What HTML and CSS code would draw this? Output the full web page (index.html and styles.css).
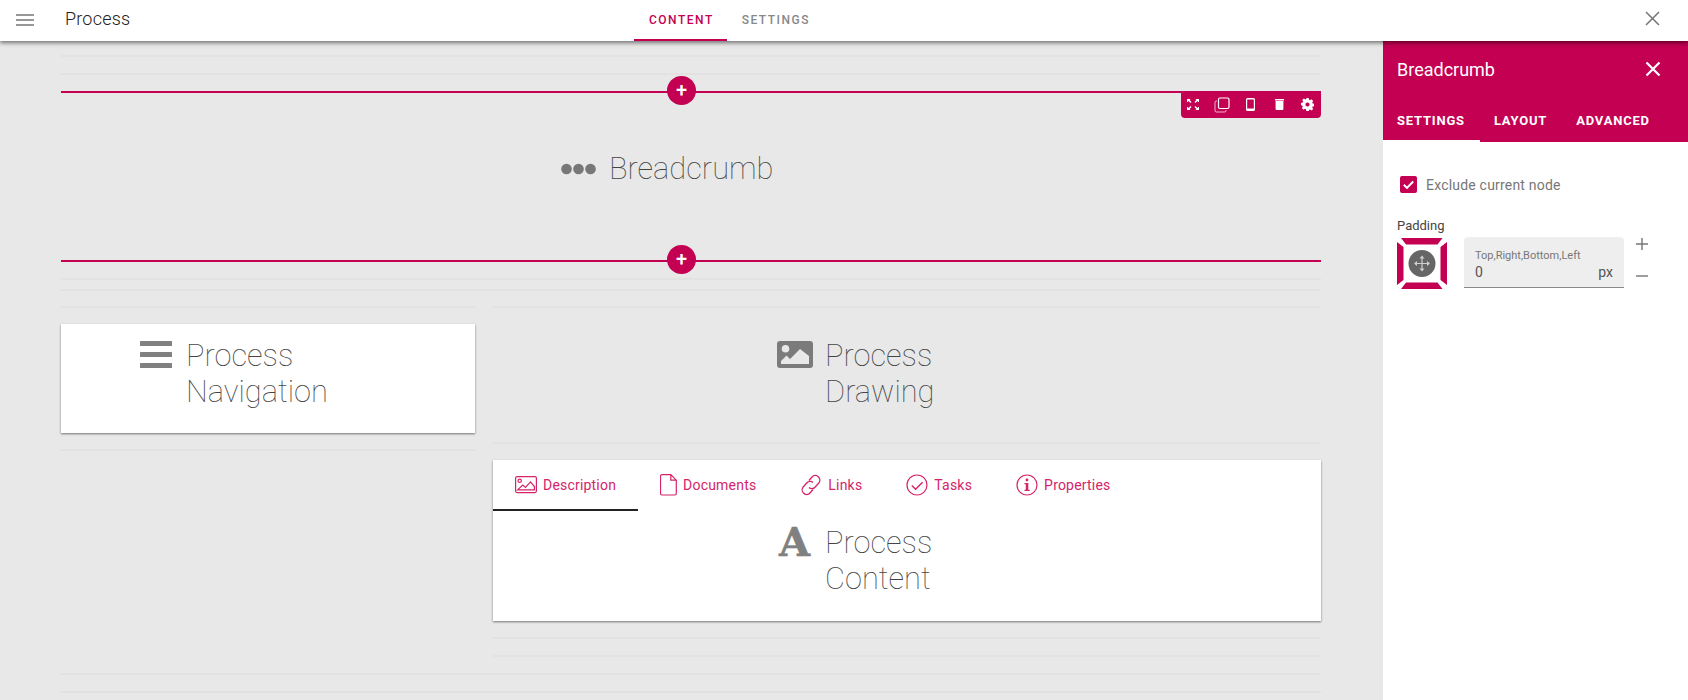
FILE: index.html
```html
<!DOCTYPE html>
<html lang="en">
<head>
<meta charset="utf-8">
<title>Process</title>
<link rel="stylesheet" href="styles.css">
</head>
<body>
<div class="app">
  <header class="topbar">
    <div class="topbar-left">
      <svg class="menu-icon" width="18" height="12" viewBox="0 0 18 12"><path d="M0 1h18M0 6h18M0 11h18" stroke="#757575" stroke-width="1.6"/></svg>
      <span class="app-title">Process</span>
    </div>
    <nav class="top-tabs">
      <span class="top-tab active">CONTENT</span>
      <span class="top-tab">SETTINGS</span>
    </nav>
    <svg class="top-close" width="15" height="15" viewBox="0 0 15 15"><path d="M1 1l13 13M14 1L1 14" stroke="#757575" stroke-width="1.5"/></svg>
  </header>
  <div class="main">
    <main class="canvas">
      <div class="rule"></div>
      <div class="rule"></div>
      <section class="active-section">
        <span class="add-btn add-top">+</span>
        <div class="toolbar">
          <svg width="12" height="11" viewBox="0 0 12 11" fill="#fff"><path d="M0 0h3.500L2.600 1 4.500 2.900 3.500 3.900 1.600 2 .8 3H0zM12 0v3h-.8L10.400 2 8.500 3.900l-1-1L9.400 1 8.500 0zM0 11V8h.8l.8 1 1.900-1.900 1 1L2.600 10l.9 1zM12 11H8.500l.9-1-1.900-1.900 1-1 1.900 1.900.8-1h.8z"/></svg>
          <svg width="16" height="16" viewBox="0 0 16 16" fill="none" stroke="#fff"><rect x="4.500" y="1" width="10.500" height="10.500" rx="1.500" stroke-width="1.200"/><path d="M3 4H2.500A1.500 1.500 0 0 0 1 5.500v8A1.500 1.500 0 0 0 2.500 15h8a1.500 1.500 0 0 0 1.500-1.500V13" stroke-width=".9" stroke-opacity=".8"/></svg>
          <svg width="9" height="13" viewBox="0 0 9 13"><path fill="#fff" fill-rule="evenodd" d="M1.500 0h6A1.500 1.500 0 0 1 9 1.500v10A1.500 1.500 0 0 1 7.500 13h-6A1.500 1.500 0 0 1 0 11.500v-10A1.500 1.500 0 0 1 1.500 0zM1.200 1.500v9h6.600v-9z"/></svg>
          <svg width="9" height="11" viewBox="0 0 9 11"><path fill="#fff" d="M0 0h9v1.500H0zM.6 2h7.800v8a1 1 0 0 1-1 1H1.600a1 1 0 0 1-1-1z"/></svg>
          <svg width="13" height="13" viewBox="0 0 13 13"><path fill="#fff" fill-rule="evenodd" d="M5.300 0h2.400l.3 1.700 1.100.5L10.500 1.200l1.700 1.700-1 1.400.5 1.100 1.700.3v2.400l-1.700.3-.5 1.100 1 1.400-1.700 1.700-1.400-1-1.100.5-.3 1.700H5.300L5 11.300l-1.100-.5-1.400 1-1.700-1.700 1-1.400-.5-1.100L0 7.300V4.900l1.700-.3.500-1.100-1-1.400L2.900.4l1.400 1 1.100-.5zM6.500 4.400a2.100 2.100 0 1 0 0 4.200 2.100 2.100 0 0 0 0-4.200z"/></svg>
        </div>
        <div class="widget">
          <div class="slot">
            <svg class="dots" width="36" height="12" viewBox="0 0 36 12" fill="#777"><circle cx="5.500" cy="6" r="5.300"/><circle cx="17.500" cy="6" r="5.300"/><circle cx="29.500" cy="6" r="5.300"/></svg>
          </div>
          <div class="widget-text">Breadcrumb</div>
        </div>
        <span class="add-btn add-bottom">+</span>
      </section>
      <div class="rule gap-one"></div>
      <div class="rule gap-two"></div>
      <div class="columns">
        <div class="col">
          <div class="rule"></div>
          <div class="card nav-card">
            <div class="widget">
              <div class="slot">
                <svg class="bars" width="32" height="27" viewBox="0 0 32 27" fill="#808080"><rect width="32" height="5" rx=".5"/><rect y="11" width="32" height="5" rx=".5"/><rect y="22" width="32" height="5" rx=".5"/></svg>
              </div>
              <div class="widget-text">Process Navigation</div>
            </div>
          </div>
          <div class="rule"></div>
        </div>
        <div class="col">
          <div class="rule"></div>
          <div class="plain-block">
            <div class="widget">
              <div class="slot">
                <svg class="picture" width="36" height="27" viewBox="0 0 36 27"><path fill="#7b7b7b" fill-rule="evenodd" d="M3 0h30a3 3 0 0 1 3 3v21a3 3 0 0 1-3 3H3a3 3 0 0 1-3-3V3a3 3 0 0 1 3-3zM8.500 4a3.800 3.800 0 1 0 0 7.600 3.800 3.800 0 0 0 0-7.600zM23 8L13 18l-3.500-3.500L4 20v3h28V15z"/></svg>
              </div>
              <div class="widget-text">Process Drawing</div>
            </div>
          </div>
          <div class="rule"></div>
          <div class="card content-card">
            <div class="tabs">
              <div class="tab active">
                <svg width="22" height="18" viewBox="0 0 22 18" fill="none" stroke="#d4246a" stroke-width="1.200"><rect x=".6" y=".6" width="20.800" height="16" rx="1.500"/><circle cx="4.700" cy="4.800" r="1.700"/><path d="M2.600 13.800h16.800V10.500L15.500 5.800 10.500 11.500 7.800 9 2.600 13.800z"/></svg>
                <span>Description</span>
              </div>
              <div class="tab">
                <svg width="17" height="22" viewBox="0 0 17 22" fill="none" stroke="#d4246a" stroke-width="1.200"><path d="M2 .7h8.800l5.500 5.500V19.500a1.500 1.500 0 0 1-1.500 1.500H2a1.500 1.500 0 0 1-1.500-1.500V2.200A1.500 1.500 0 0 1 2 .7zM10.800.7v5.500h5.500"/></svg>
                <span>Documents</span>
              </div>
              <div class="tab">
                <svg width="22" height="22" viewBox="0 0 22 22" fill="none" stroke="#d4246a" stroke-width="1.300"><path d="M9 6.500l3-3.500a4.200 4.200 0 0 1 6.500 0 4.400 4.400 0 0 1 .3 6l-3.800 4.200a4.200 4.200 0 0 1-6 .3"/><path d="M13 15.500l-3 3.500a4.200 4.200 0 0 1-6.500 0 4.400 4.400 0 0 1-.3-6L7 8.800a4.200 4.200 0 0 1 6-.3"/></svg>
                <span>Links</span>
              </div>
              <div class="tab">
                <svg width="22" height="22" viewBox="0 0 22 22" fill="none" stroke="#d4246a" stroke-width="1.200"><circle cx="11" cy="11" r="10"/><path d="M5.800 11.500l3.800 3.800 7-7" stroke-width="1.400"/></svg>
                <span>Tasks</span>
              </div>
              <div class="tab">
                <svg width="22" height="22" viewBox="0 0 22 22" fill="none" stroke="#d4246a" stroke-width="1.200"><circle cx="11" cy="11" r="10"/><circle cx="11" cy="6" r="1.400" fill="#d4246a" stroke="none"/><path fill="#d4246a" stroke="none" d="M8.500 9h3.800v6.800h1.300V17H8.500v-1.200h1.300V10.200H8.500z"/></svg>
                <span>Properties</span>
              </div>
            </div>
            <div class="widget">
              <div class="slot">
                <span class="font-glyph">A</span>
              </div>
              <div class="widget-text">Process Content</div>
            </div>
          </div>
          <div class="rule"></div>
          <div class="rule"></div>
        </div>
      </div>
      <div class="rule"></div>
      <div class="rule"></div>
    </main>
    <aside class="panel">
      <div class="panel-head">
        <div class="panel-title-row">
          <span class="panel-title">Breadcrumb</span>
          <svg width="16" height="16" viewBox="0 0 16 16"><path d="M1.500 1.500l13 13M14.500 1.500l-13 13" stroke="#fff" stroke-width="2.200"/></svg>
        </div>
        <div class="panel-tabs">
          <span class="panel-tab active">SETTINGS</span>
          <span class="panel-tab">LAYOUT</span>
          <span class="panel-tab">ADVANCED</span>
        </div>
      </div>
      <div class="panel-body">
        <label class="check-row">
          <svg width="17" height="17" viewBox="0 0 17 17"><rect width="17" height="17" rx="2" fill="#c40052"/><path d="M3.800 8.800l3.200 3.100 6.200-6.400" fill="none" stroke="#fff" stroke-width="2"/></svg>
          <span>Exclude current node</span>
        </label>
        <div class="padding-label">Padding</div>
        <div class="padding-row">
          <svg width="50" height="51" viewBox="0 0 50 51">
            <g fill="#c40052">
              <path d="M4 0h41.500l-5 6.500H9z"/><path d="M9 44.500h31.500l5 6.500H4z"/>
              <path d="M0 4l6.500 5v33L0 47z"/><path d="M50 4l-6.500 5v33l6.500 5z"/>
            </g>
            <circle cx="25" cy="25.500" r="13.500" fill="#666"/>
            <path d="M25 19v13M18.500 25.500h13" stroke="#cfcfcf" stroke-width="1.200"/>
            <path d="M25 17.500l2.500 3h-5zM25 33.500l2.500-3h-5zM17 25.500l3-2.500v5zM33 25.500l-3-2.500v5z" fill="#cfcfcf"/>
          </svg>
          <div class="padding-field">
            <div class="field-label">Top,Right,Bottom,Left</div>
            <div class="field-value"><span>0</span><span>px</span></div>
          </div>
          <div class="stepper">
            <svg width="14" height="14" viewBox="0 0 14 14"><path d="M7 1v12M1 7h12" stroke="#757575" stroke-width="1.400"/></svg>
            <svg width="14" height="14" viewBox="0 0 14 14"><path d="M1 7h12" stroke="#757575" stroke-width="1.400"/></svg>
          </div>
        </div>
      </div>
    </aside>
  </div>
</div>
</body>
</html>
```

FILE: styles.css
```css
* { box-sizing: border-box; }
html, body { margin: 0; height: 100%; overflow: hidden; }
body { font-family: Roboto, "Liberation Sans", sans-serif; background: #e8e8e8; color: #333; }

.app { display: flex; flex-direction: column; height: 700px; }

.topbar {
  position: relative; z-index: 5;
  flex: 0 0 41px; display: flex; align-items: center;
  background: #fff; box-shadow: 0 2px 4px rgba(0,0,0,.5);
}
.topbar-left { flex: 0 0 634px; display: flex; align-items: center; padding-left: 16px; }
.menu-icon { flex: none; margin-bottom: 1px; }
.app-title { margin: 0 0 4px 31px; font-size: 18px; font-weight: 300; color: #222; letter-spacing: .2px; }
.top-tabs { display: flex; height: 41px; flex: 1; }
.top-tab {
  padding: 1px 13px 0 15px; font-size: 12px; font-weight: 500; letter-spacing: 1.500px;
  line-height: 38px; color: #888; border-bottom: 2px solid transparent;
}
.top-tab.active { color: #c40052; border-bottom-color: #c40052; }
.top-close { margin: 0 28px 4px 0; flex: none; }

.main { flex: 1; display: flex; min-height: 0; }
.canvas { flex: 1; padding: 14px 62px 0 61px; min-width: 0; overflow: hidden; }
.rule { height: 2px; background: #e2e2e2; margin-bottom: 16px; }
.rule.gap-one { margin-top: 16px; margin-bottom: 9px; }
.rule.gap-two { margin-bottom: 15px; }

.active-section {
  position: relative; height: 171px;
  border-top: 2px solid #c40052; border-bottom: 2px solid #c40052;
  padding-top: 58px;
}
.add-btn {
  position: absolute; left: 606px; width: 29px; height: 29px; border-radius: 50%;
  background: #c40052; color: #fff; font-size: 20px; font-weight: 500;
  line-height: 28px; text-align: center;
}
.add-top { top: -17px; }
.add-bottom { bottom: -14px; }
.toolbar {
  position: absolute; right: 0; top: -2px; width: 140px; height: 27px;
  display: grid; grid-template-columns: repeat(5, 24px); column-gap: 4.700px;
  place-items: center; background: #c40052; border-radius: 0 0 4px 4px;
}

.widget { width: 258px; margin: 0 auto; display: flex; }
.slot { flex: 0 0 47px; }
.widget-text { flex: 1; font-size: 30.800px; line-height: 36px; font-weight: 100; color: #444; }
.dots { display: block; margin: 12px 0 0 -1px; }
.bars { display: block; margin: 3px 0 0 1px; }
.picture { display: block; margin: 3px 0 0 -1px; }
.font-glyph {
  display: block; margin: -1px 0 0 1px; font-family: "DejaVu Serif", serif; font-weight: 700;
  font-size: 40px; line-height: 36px; color: #808080; -webkit-text-stroke: .5px #808080;
}

.columns { display: grid; grid-template-columns: 1fr 2fr; column-gap: 18px; align-items: start; }
.card { background: #fff; box-shadow: 0 1px 2px rgba(0,0,0,.5); margin-bottom: 16px; }
.nav-card { height: 109px; padding-top: 14px; }
.plain-block { height: 102px; padding-top: 14px; margin-bottom: 16px; }
.content-card { height: 161px; }

.tabs { display: flex; height: 51px; margin-bottom: 14px; }
.tab {
  display: flex; align-items: center; gap: 6px; padding: 0 22px;
  border-bottom: 2px solid transparent; font-size: 14px; color: #d4246a; letter-spacing: .2px;
}
.tab.active { border-bottom-color: #222; }

.panel { flex: 0 0 305px; display: flex; flex-direction: column; background: #fff; }
.panel-head { background: #c40052; color: #fff; height: 101px; }
.panel-title-row {
  height: 56px; display: flex; align-items: center; justify-content: space-between;
  padding: 0 27px 0 14px;
}
.panel-title { font-size: 18px; font-weight: 400; }
.panel-tabs { display: flex; height: 45px; }
.panel-tab {
  padding: 0 15px 0 14px; font-size: 13px; font-weight: 700; letter-spacing: .8px;
  line-height: 47px; height: 45px;
}
.panel-tab.active { border-bottom: 2px solid #fff; }
.panel-body { flex: 1; padding: 34px 0 0 14px; }
.check-row { display: flex; align-items: center; gap: 9px; margin-left: 3px; font-size: 14px; color: #777; letter-spacing: .2px; }
.check-row svg { flex: none; }
.padding-label { margin-top: 25px; font-size: 13px; line-height: 16px; color: #444; }
.padding-row { display: flex; align-items: flex-start; margin-top: 4px; }
.padding-row > svg { flex: none; }
.padding-field {
  width: 160px; height: 51px; margin: -1px 0 0 17px; padding: 12px 11px 0;
  background: #eee; border-bottom: 1px solid #888; border-radius: 4px 4px 0 0;
}
.field-label { font-size: 11px; line-height: 13px; color: #777; }
.field-value { display: flex; justify-content: space-between; font-size: 14px; line-height: 20px; color: #555; }
.stepper { display: flex; flex-direction: column; gap: 18px; margin: -1px 0 0 11px; }
.stepper svg { display: block; }
```
